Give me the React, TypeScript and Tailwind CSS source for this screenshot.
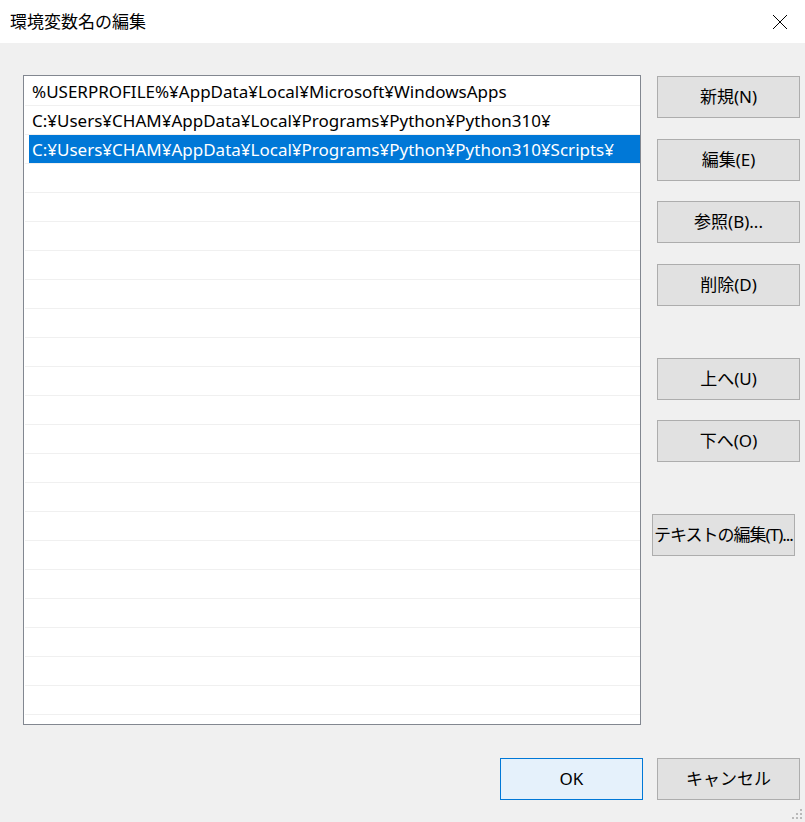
import React from 'react';

const font = { fontFamily: '"Noto Sans", "Noto Sans CJK JP", sans-serif' };

const paths = [
  '%USERPROFILE%¥AppData¥Local¥Microsoft¥WindowsApps',
  'C:¥Users¥CHAM¥AppData¥Local¥Programs¥Python¥Python310¥',
  'C:¥Users¥CHAM¥AppData¥Local¥Programs¥Python¥Python310¥Scripts¥',
];

function Button({ label, className = '' }: { label: string; className?: string }) {
  return (
    <div
      className={`w-[143px] h-[42px] flex items-center justify-center border border-[#adadad] bg-[#e1e1e1] text-[17px] text-black whitespace-nowrap ${className}`}
    >
      {label}
    </div>
  );
}

export default function App() {
  const rows = Array.from({ length: 22 }, (_, i) => paths[i] ?? '');

  return (
    <div className="w-[805px] h-[822px] bg-[#f0f0f0] flex flex-col relative overflow-hidden" style={font}>
      {/* Title bar */}
      <div className="h-[43px] bg-white flex items-center justify-between pl-[10px] pr-[16px] shrink-0">
        <span className="text-[17px] text-black">環境変数名の編集</span>
        <svg width="16" height="16" viewBox="0 0 16 16" className="mr-[1px]">
          <path d="M1 1 L15 15 M15 1 L1 15" stroke="#000" strokeWidth="1" fill="none" />
        </svg>
      </div>

      <div className="flex pl-[23px] pt-[32px]">
        {/* List */}
        <div className="w-[618px] h-[650px] border border-[#828790] bg-white pt-[1px] overflow-hidden shrink-0">
          {rows.map((text, i) => (
            <div key={i} className="h-[29px] ml-[1px] border-b border-[#f0f0f0] flex">
              <div
                className={`ml-[4px] flex-1 h-full flex items-center pl-[3px] pt-[1px] text-[17px] whitespace-nowrap ${
                  i === 2 ? 'bg-[#0078d7] text-white' : 'text-black'
                }`}
              >
                {text}
              </div>
            </div>
          ))}
        </div>

        {/* Side buttons */}
        <div className="ml-[16px] pt-[1px] flex flex-col">
          <Button label="新規(N)" />
          <Button label="編集(E)" className="mt-[21px]" />
          <Button label="参照(B)..." className="mt-[20px]" />
          <Button label="削除(D)" className="mt-[21px]" />
          <Button label="上へ(U)" className="mt-[52px]" />
          <Button label="下へ(O)" className="mt-[20px]" />
          <Button
            label="テキストの編集(T)..."
            className="mt-[52px] -ml-[5px] h-[41px] text-[15.5px] tracking-[-1px]"
          />
        </div>
      </div>

      {/* Bottom buttons */}
      <div className="flex justify-end gap-[14px] pr-[5px] mt-[33px]">
        <div className="w-[143px] h-[42px] flex items-center justify-center border border-[#0078d7] bg-[#e5f1fb] text-[17px] text-black">
          OK
        </div>
        <Button label="キャンセル" />
      </div>

      {/* Size grip */}
      <svg width="12" height="12" viewBox="0 0 12 12" className="absolute right-[1px] bottom-[1px]">
        <rect x="8" y="0" width="2" height="2" fill="#b9b9b9" />
        <rect x="4" y="4" width="2" height="2" fill="#b9b9b9" />
        <rect x="8" y="4" width="2" height="2" fill="#b9b9b9" />
        <rect x="0" y="8" width="2" height="2" fill="#b9b9b9" />
        <rect x="4" y="8" width="2" height="2" fill="#b9b9b9" />
        <rect x="8" y="8" width="2" height="2" fill="#b9b9b9" />
      </svg>
    </div>
  );
}
